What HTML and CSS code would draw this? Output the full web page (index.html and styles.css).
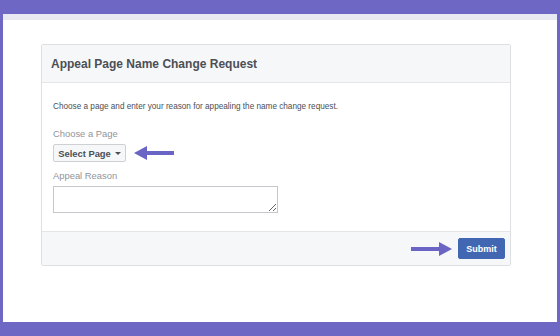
FILE: index.html
```html
<!DOCTYPE html>
<html>
<head>
	<title>Appeal Page Name Change Request</title>
	<link rel="stylesheet" href="styles.css">
</head>
<body>
	<div class="frame">
		<div class="card">
			<div class="card-header">
				<h1>Appeal Page Name Change Request</h1>
			</div>
			<div class="card-body">
				<p class="intro">Choose a page and enter your reason for appealing the name change request.</p>
				<label class="field-label">Choose a Page</label>
				<div class="select-row">
					<button class="select-btn">Select Page <span class="caret"></span></button>
					<svg class="arrow" width="40" height="14" viewBox="0 0 40 14">
						<polygon points="0,7 13,0 13,5 40,5 40,9 13,9 13,14" fill="#6a64c4"/>
					</svg>
				</div>
				<label class="field-label">Appeal Reason</label>
				<textarea class="reason"></textarea>
			</div>
			<div class="card-footer">
				<svg class="arrow" width="41" height="14" viewBox="0 0 41 14">
					<polygon points="41,7 28,0 28,5 0,5 0,9 28,9 28,14" fill="#6a64c4"/>
				</svg>
				<button class="submit-btn">Submit</button>
			</div>
		</div>
	</div>
</body>
</html>
```

FILE: styles.css
```css
body {
	margin: 0;
	background-color: #6e67c3;
	font-family: "Liberation Sans", Arial, sans-serif;
	padding: 14px 3px;
}
.frame {
	height: 308px;
	background-color: #fff;
	border-top: 6px solid #e9eaf1;
	box-sizing: border-box;
	padding: 24px 0 0 38px;
}
.card {
	width: 470px;
	border: 1px solid #dddfe2;
	border-radius: 2px;
	box-sizing: border-box;
}
.card-header {
	background-color: #f6f7f9;
	border-bottom: 1px solid #e5e5e5;
	height: 37px;
	padding: 0 9px;
	display: flex;
	align-items: center;
}
.card-header h1 {
	margin: 0;
	font-size: 12px;
	color: #4b4f56;
}
.card-body {
	padding: 19px 11px 18px;
}
.intro {
	margin: 0 0 17px;
	font-size: 8.2px;
	color: #4b4f56;
}
.field-label {
	display: block;
	font-size: 9.4px;
	color: #90949c;
	margin-bottom: 5px;
}
.select-row {
	display: flex;
	align-items: center;
	gap: 8px;
	margin-bottom: 8px;
}
.select-btn {
	font-family: inherit;
	font-weight: bold;
	font-size: 9.4px;
	color: #4b4f56;
	background-color: #f6f7f9;
	border: 1px solid #ced0d4;
	border-radius: 2px;
	height: 18px;
	width: 73px;
	padding: 0;
	display: flex;
	align-items: center;
	justify-content: center;
	gap: 4px;
}
.caret {
	width: 0;
	height: 0;
	border-left: 3px solid transparent;
	border-right: 3px solid transparent;
	border-top: 3px solid #4b4f56;
}
.reason {
	display: block;
	width: 225px;
	height: 27px;
	box-sizing: border-box;
	border: 1px solid #c4c7cc;
	margin: 0;
}
.card-footer {
	background-color: #f6f7f9;
	border-top: 1px solid #e5e5e5;
	height: 33px;
	display: flex;
	align-items: center;
	justify-content: flex-end;
	gap: 6px;
	padding: 0 5px;
}
.submit-btn {
	font-family: inherit;
	font-weight: bold;
	font-size: 9px;
	color: #fff;
	background-color: #4267b2;
	border: 1px solid #4267b2;
	border-radius: 2px;
	width: 47px;
	height: 21px;
	padding: 0;
}
```
